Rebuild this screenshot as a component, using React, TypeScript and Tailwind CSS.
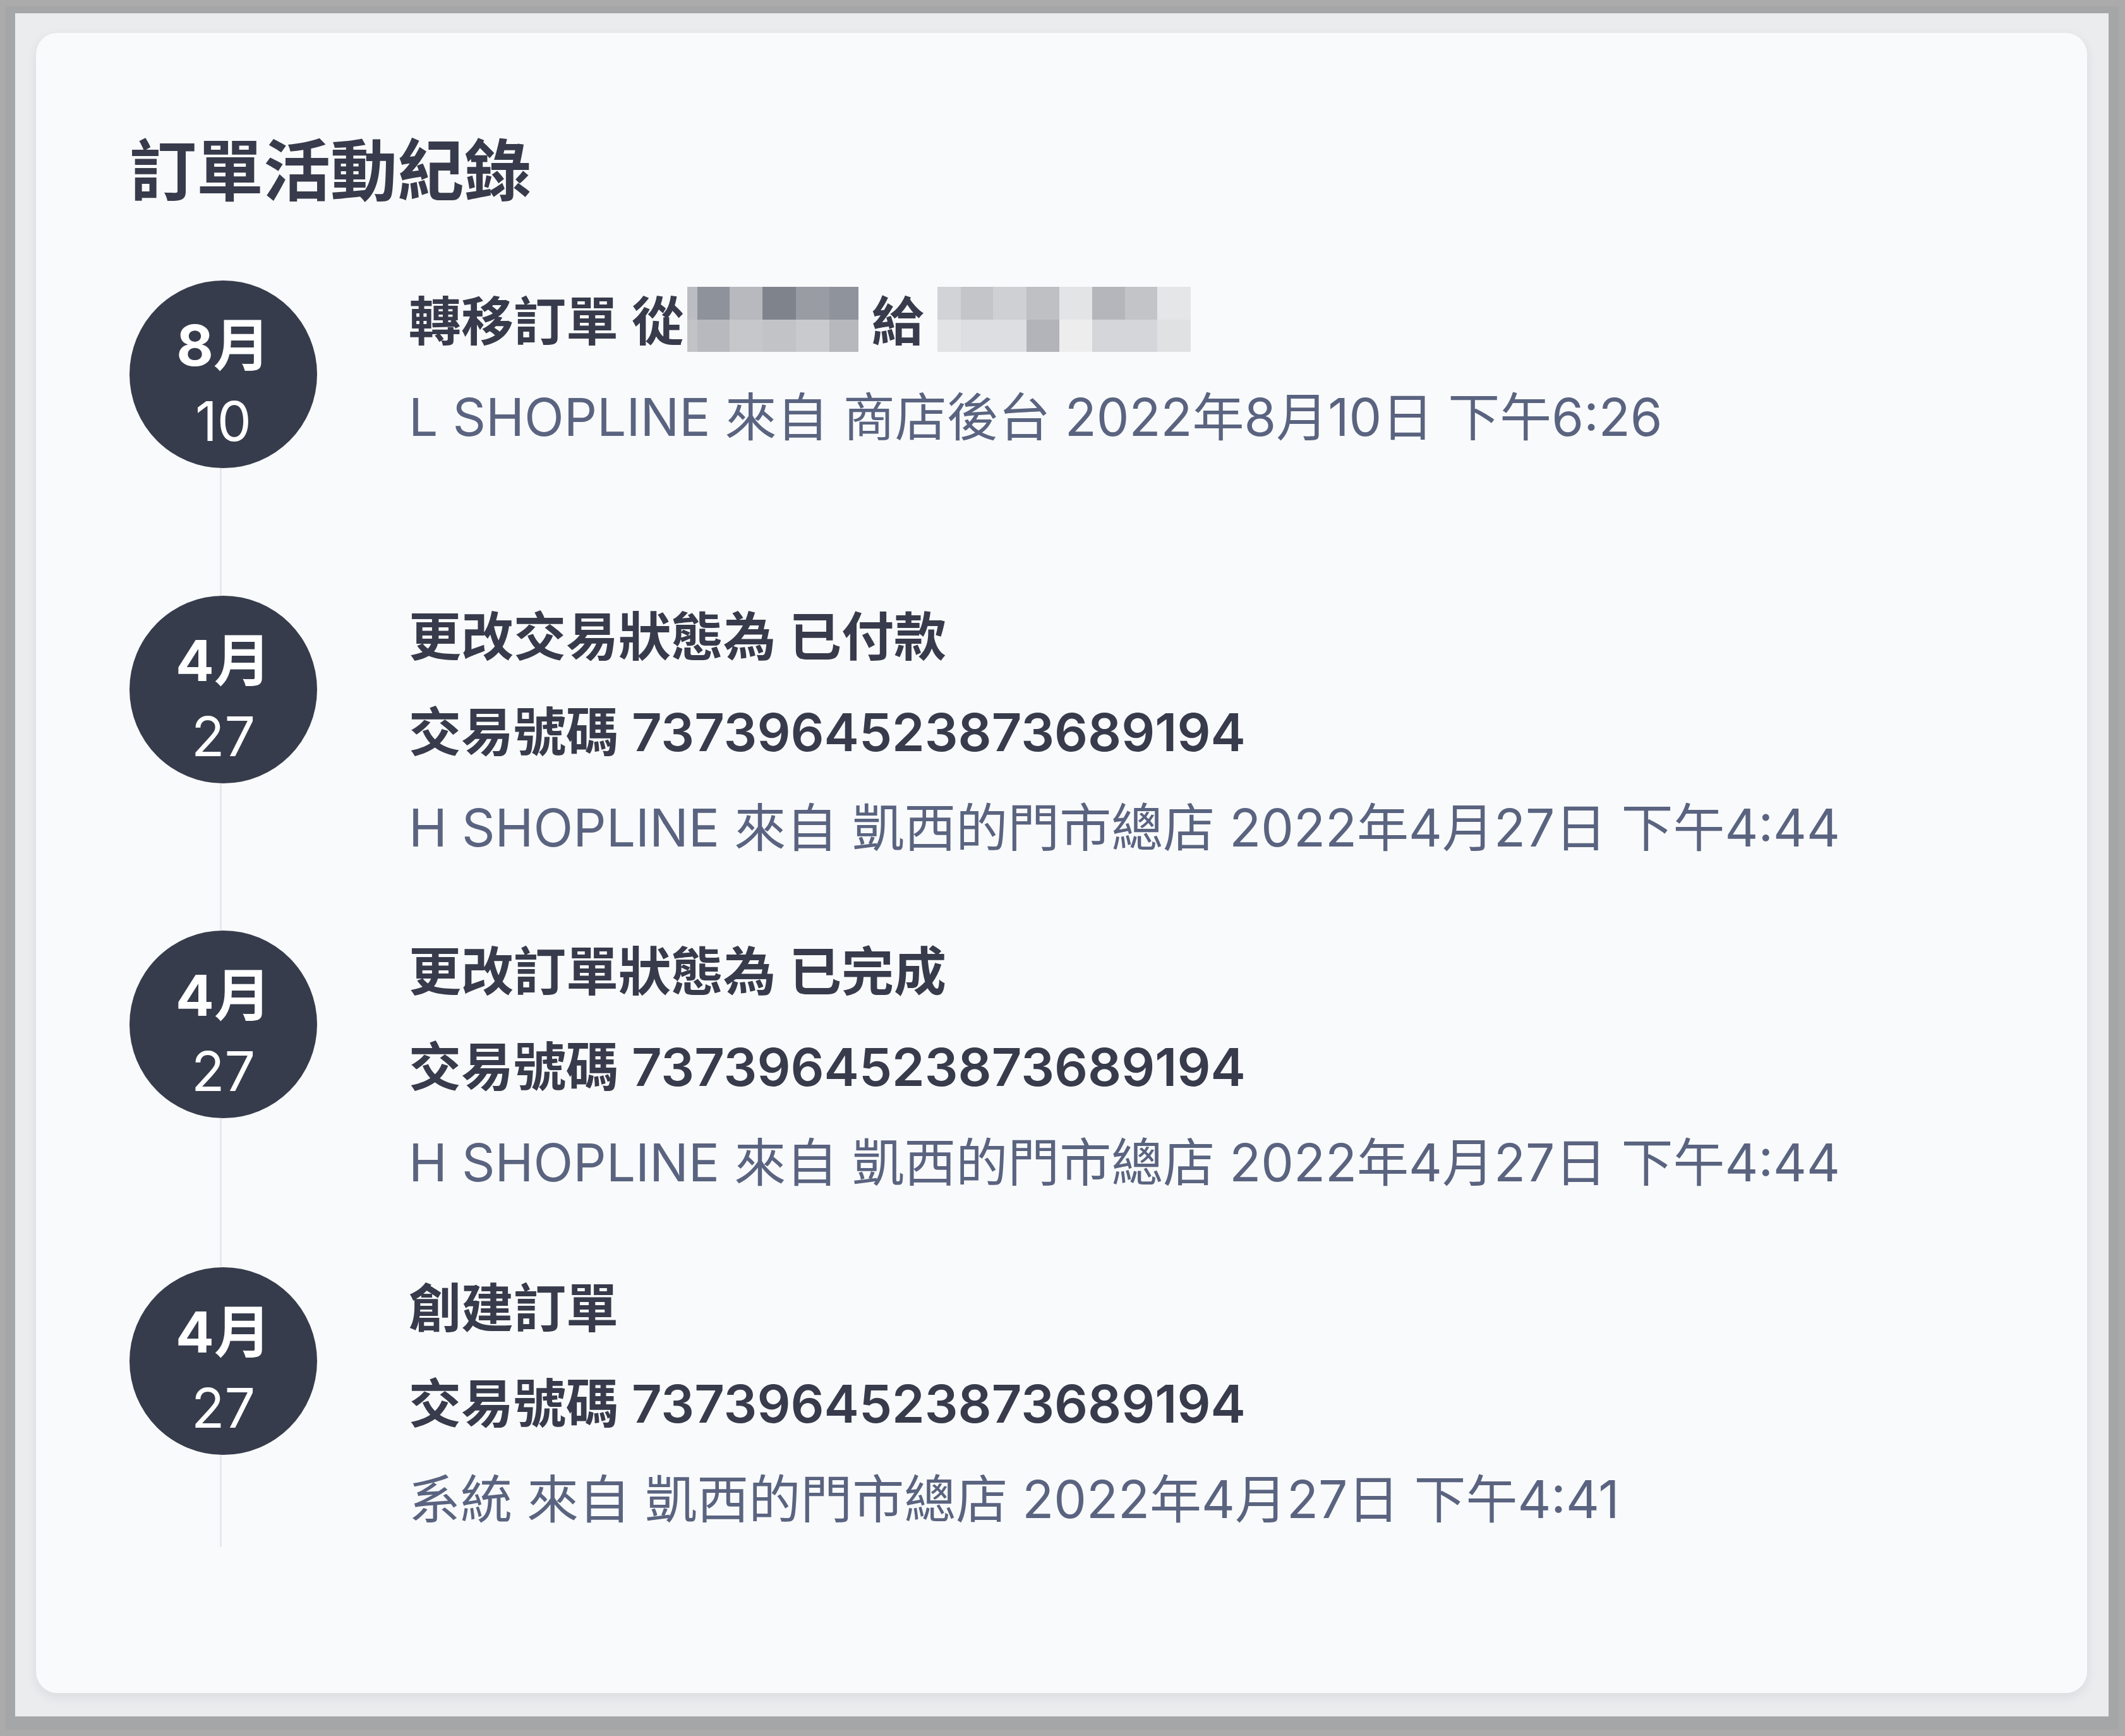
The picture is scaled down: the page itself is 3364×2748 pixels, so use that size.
import React from "react";

type Cell = { w: number; top: string; bottom: string };

// pixelated (blurred) store names in the first entry
const fromStore: Cell[] = [
  { w: 16, top: "#bcbdc2", bottom: "#c2c3c7" },
  { w: 51, top: "#8e929a", bottom: "#b7b9be" },
  { w: 52, top: "#b7b9be", bottom: "#c6c7cb" },
  { w: 53, top: "#7f838c", bottom: "#c2c3c7" },
  { w: 53, top: "#999ca3", bottom: "#c9cacd" },
  { w: 46, top: "#8f939b", bottom: "#b6b8bd" },
];

const toStore: Cell[] = [
  { w: 37, top: "#d2d3d6", bottom: "#e2e3e5" },
  { w: 51, top: "#c4c5c9", bottom: "#dddee1" },
  { w: 53, top: "#cfd0d3", bottom: "#dddee1" },
  { w: 52, top: "#bfc0c4", bottom: "#b3b4b9" },
  { w: 52, top: "#e3e4e6", bottom: "#ededee" },
  { w: 52, top: "#b5b6bb", bottom: "#d5d6d9" },
  { w: 51, top: "#c3c4c8", bottom: "#d5d6d9" },
  { w: 53, top: "#e5e6e8", bottom: "#e0e1e3" },
];

function Mosaic({ cells, className }: { cells: Cell[]; className?: string }) {
  return (
    <span className={`inline-block overflow-hidden h-[103px] align-[-18px] ${className ?? ""}`}>
      <span className="flex h-full">
        {cells.map((c, i) => (
          <span key={i} className="flex flex-col" style={{ width: c.w }}>
            <span className="h-[52px]" style={{ backgroundColor: c.top }} />
            <span className="h-[51px]" style={{ backgroundColor: c.bottom }} />
          </span>
        ))}
      </span>
    </span>
  );
}

type Activity = {
  month: string;
  day: string;
  title: React.ReactNode;
  txn?: string;
  meta: string;
};

const activities: Activity[] = [
  {
    month: "8月",
    day: "10",
    title: (
      <>
        轉移訂單 從<Mosaic cells={fromStore} className="ml-[5px]" /> 給 <Mosaic cells={toStore} />
      </>
    ),
    meta: "L SHOPLINE 來自 商店後台 2022年8月10日 下午6:26",
  },
  {
    month: "4月",
    day: "27",
    title: "更改交易狀態為 已付款",
    txn: "交易號碼 7373964523873689194",
    meta: "H SHOPLINE 來自 凱西的門市總店 2022年4月27日 下午4:44",
  },
  {
    month: "4月",
    day: "27",
    title: "更改訂單狀態為 已完成",
    txn: "交易號碼 7373964523873689194",
    meta: "H SHOPLINE 來自 凱西的門市總店 2022年4月27日 下午4:44",
  },
  {
    month: "4月",
    day: "27",
    title: "創建訂單",
    txn: "交易號碼 7373964523873689194",
    meta: "系統 來自 凱西的門市總店 2022年4月27日 下午4:41",
  },
];

export default function App() {
  return (
    <div
      className="w-[3364px] h-[2748px] bg-[#ababab] pl-[9px] pt-[10px] pr-[10px] pb-[10px]"
      style={{ fontFamily: 'Inter, "Noto Sans CJK TC", sans-serif' }}
    >
      <div className="h-full bg-[#a5a6a8] pl-[15px] pt-[11px] pr-[16px] pb-[21px]">
        <div className="h-full bg-[#ebecee] pl-[33px] pt-[31px] pr-[34px] pb-[37px]">
          <div className="h-full rounded-[34px] bg-[#f9fafb] shadow-[0_6px_18px_rgba(15,23,42,0.08)] pl-[148px] pt-[166px]">
            <h2 className="text-[106px] leading-none font-semibold text-[#373b4b] mb-[120px] whitespace-nowrap">
              訂單活動紀錄
            </h2>

            <div className="flex flex-col">
              {activities.map((a, i) => {
                const last = i === activities.length - 1;
                return (
                  <div key={i} className={`flex ${last ? "" : "min-h-[499px]"}`}>
                    <div className="w-[297px] shrink-0 flex flex-col items-center">
                      <div className="w-[297px] h-[297px] rounded-full bg-[#373c4c] text-white flex flex-col items-center pt-[44px]">
                        <div className="text-[90px] leading-[118px] font-bold">{a.month}</div>
                        <div className="text-[86px] leading-[122px]">{a.day}</div>
                      </div>
                      <div className="flex-1 w-[3px] mr-[8px] bg-[#e6e8ec]" />
                    </div>

                    <div className={`ml-[145px] -mt-[10px] text-[83px] leading-[151px] ${last ? "" : i === 2 ? "pb-[90px]" : "pb-[87px]"}`}>
                      <div className="font-semibold text-[#373b4b] whitespace-nowrap">{a.title}</div>
                      {a.txn && <div className="font-semibold text-[#373b4b] whitespace-nowrap">{a.txn}</div>}
                      <div className="text-[82px] text-[#5a6480] whitespace-nowrap">{a.meta}</div>
                    </div>
                  </div>
                );
              })}
            </div>
          </div>
        </div>
      </div>
    </div>
  );
}
